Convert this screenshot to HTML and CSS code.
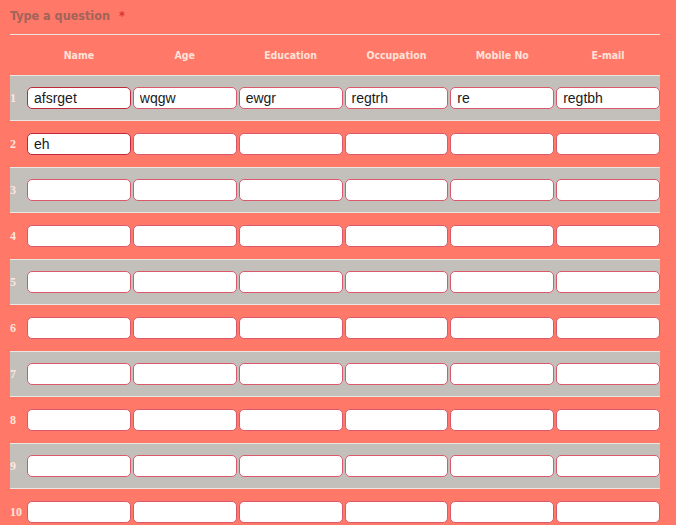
FILE: index.html
```html
<!DOCTYPE html>
<html>
<head>
<meta charset="utf-8">
<link rel="stylesheet" href="styles.css">
</head>
<body>
<div class="form">
  <div class="title">Type a question <span class="req">*</span></div>
  <div class="grid head">
    <div></div>
    <div class="lbl">Name</div>
    <div class="lbl">Age</div>
    <div class="lbl">Education</div>
    <div class="lbl">Occupation</div>
    <div class="lbl">Mobile No</div>
    <div class="lbl">E-mail</div>
  </div>
  <div class="grid row odd">
    <div class="num">1</div>
    <input class="cell focus" value="afsrget"><input class="cell" value="wqgw"><input class="cell" value="ewgr"><input class="cell" value="regtrh"><input class="cell" value="re"><input class="cell" value="regtbh">
  </div>
  <div class="grid row">
    <div class="num">2</div>
    <input class="cell focus" value="eh"><input class="cell"><input class="cell"><input class="cell"><input class="cell"><input class="cell">
  </div>
  <div class="grid row odd">
    <div class="num">3</div>
    <input class="cell"><input class="cell"><input class="cell"><input class="cell"><input class="cell"><input class="cell">
  </div>
  <div class="grid row">
    <div class="num">4</div>
    <input class="cell"><input class="cell"><input class="cell"><input class="cell"><input class="cell"><input class="cell">
  </div>
  <div class="grid row odd">
    <div class="num">5</div>
    <input class="cell"><input class="cell"><input class="cell"><input class="cell"><input class="cell"><input class="cell">
  </div>
  <div class="grid row">
    <div class="num">6</div>
    <input class="cell"><input class="cell"><input class="cell"><input class="cell"><input class="cell"><input class="cell">
  </div>
  <div class="grid row odd">
    <div class="num">7</div>
    <input class="cell"><input class="cell"><input class="cell"><input class="cell"><input class="cell"><input class="cell">
  </div>
  <div class="grid row">
    <div class="num">8</div>
    <input class="cell"><input class="cell"><input class="cell"><input class="cell"><input class="cell"><input class="cell">
  </div>
  <div class="grid row odd">
    <div class="num">9</div>
    <input class="cell"><input class="cell"><input class="cell"><input class="cell"><input class="cell"><input class="cell">
  </div>
  <div class="grid row">
    <div class="num">10</div>
    <input class="cell"><input class="cell"><input class="cell"><input class="cell"><input class="cell"><input class="cell">
  </div>
</div>
</body>
</html>
```
FILE: styles.css
```css
html, body {
  margin: 0;
  padding: 0;
  background: #ff7868;
}
.form {
  width: 650px;
  padding: 0 16px 0 10px;
}
.title {
  height: 34px;
  line-height: 32px;
  font-family: "DejaVu Sans Condensed", "DejaVu Sans", sans-serif;
  font-weight: bold;
  font-size: 12.5px;
  color: #a0645b;
  border-bottom: 1px solid #f2e2dc;
}
.req {
  color: #e0302c;
  margin-left: 5px;
}
.grid {
  display: grid;
  grid-template-columns: 15px repeat(6, 1fr);
  column-gap: 2px;
  align-items: center;
}
.head {
  height: 40px;
}
.lbl {
  text-align: center;
  font-family: "DejaVu Sans Condensed", "DejaVu Sans", sans-serif;
  font-weight: bold;
  font-size: 10.5px;
  color: #ffe2d8;
}
.row {
  box-sizing: border-box;
  height: 46px;
  padding: 12px 0;
}
.row.odd {
  background: #c3c0bb;
  border-top: 1px solid #ece6e2;
  border-bottom: 1px solid #ece6e2;
  padding: 11px 0;
}
.num {
  font-family: "Liberation Serif", serif;
  font-weight: bold;
  font-size: 12px;
  color: #ffe6de;
}
.cell {
  box-sizing: border-box;
  width: 100%;
  height: 22px;
  margin: 0;
  padding: 0 6px;
  border: 1px solid #d9586a;
  border-radius: 5px;
  background: #fff;
  font-family: "Liberation Sans", Arial, sans-serif;
  font-size: 14px;
  color: #1a1a1a;
  outline: none;
}
.cell.focus {
  border-color: #c0283c;
}
```
